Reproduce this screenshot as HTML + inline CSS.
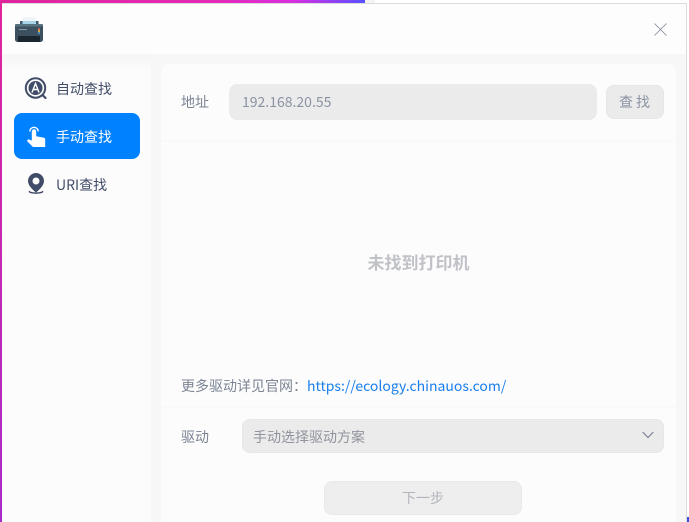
<!DOCTYPE html>
<html><head><meta charset="utf-8">
<style>
*{box-sizing:border-box}
html,body{margin:0;padding:0}
body{width:689px;height:522px;position:relative;overflow:hidden;background:#fff;font-family:"Noto Sans CJK SC","Liberation Sans",sans-serif;font-size:14px}
.a{position:absolute;white-space:nowrap}
</style></head><body>
<div class="a" style="left:0;top:0;width:365px;height:3px;background:linear-gradient(90deg,#e0249c 0,#e52ab8 60%,#d92ee0 80%,#5a50ff 100%)"></div>
<div class="a" style="left:365px;top:0;width:10px;height:3px;background:#f4f4f4"></div>
<div class="a" style="left:0;top:0;width:2px;height:522px;background:linear-gradient(180deg,#e0249c 0,#a82bc8 100%)"></div>
<div class="a" style="left:2px;top:3px;width:685px;height:519px;background:#f7f7f7;border-top:1px solid #dcdcdc;border-right:1px solid #dcdcdc"></div>
<div class="a" style="left:687px;top:517px;width:2px;height:5px;background:#3b50e0"></div>
<!-- title bar -->
<div class="a" style="left:2px;top:4px;width:684px;height:50px;background:#fdfdfd"></div>
<svg class="a" style="left:14px;top:16px" width="30" height="28" viewBox="0 0 30 28">
<path d="M8 6l1-5h12l2 5z" fill="#eef5f8"/><rect x="8" y="5" width="15" height="3" fill="#a8d3e8"/>
<rect x="6" y="5" width="2.500" height="4" fill="#3c5a68"/><rect x="22" y="5" width="2.500" height="4" fill="#3c5a68"/>
<rect x="1" y="8" width="28" height="18" rx="2.500" fill="#3d505f"/>
<rect x="1" y="8" width="28" height="2.500" rx="1" fill="#56727f"/>
<rect x="4" y="20" width="22" height="6" fill="#1a2630"/>
<rect x="24" y="12" width="2" height="2" fill="#d0604e"/><rect x="24" y="14" width="2" height="2" fill="#d8a83c"/><rect x="24" y="16" width="2" height="2" fill="#4a8ccc"/>
<rect x="5" y="13" width="8" height="1" fill="#8a9aa5"/>
</svg>
<svg class="a" style="left:654px;top:23px" width="13" height="13" viewBox="0 0 13 13"><path d="M.5.5l12 12M12.5.5l-12 12" stroke="#7d8494" stroke-width=".8" fill="none"/></svg>
<!-- sidebar -->
<div class="a" style="left:2px;top:54px;width:149px;height:468px;background:linear-gradient(#f5f5f5 0,#fcfcfc 18px)"></div>
<div class="a" style="left:14px;top:113px;width:126px;height:46px;background:#0081ff;border-radius:8px"></div>
<svg class="a" style="left:24px;top:77px" width="23" height="23" viewBox="0 0 23 23">
<circle cx="11.500" cy="11" r="9.700" fill="none" stroke="#414d68" stroke-width="2"/>
<circle cx="11.500" cy="11" r="7" fill="#414d68"/>
<path d="M8 15.500L11.500 6.500l3.500 9M9.300 12.500h4.400" fill="none" stroke="#fff" stroke-width="1.400"/>
<path d="M18.500 18l3 3" stroke="#414d68" stroke-width="2.200" stroke-linecap="round"/>
</svg>
<svg class="a" style="left:26px;top:125px" width="20" height="23" viewBox="0 0 20 23">
<path d="M3.800 6.500a4.200 4.200 0 0 1 8.400 0" fill="none" stroke="#fff" stroke-width="1.400"/>
<path d="M5.800 6.500a2.200 2.200 0 0 1 4.400 0v4.800l7.300 1.300c1.200.3 1.700 1 1.700 2.100V22H7l-6-6 1-1.800 3.800 1.300z" fill="#fff"/>
</svg>
<svg class="a" style="left:26px;top:172px" width="20" height="23" viewBox="0 0 20 23">
<path fill-rule="evenodd" d="M10 1a8 8 0 0 1 8 8c0 4.500-4.500 8.500-8 11.500C6.500 17.500 2 13.500 2 9a8 8 0 0 1 8-8zm0 4.500a3.500 3.500 0 1 0 0 7 3.500 3.500 0 0 0 0-7z" fill="#414d68"/>
<path d="M3.500 19c-1.500 2.800 14.500 2.800 13 0" fill="none" stroke="#414d68" stroke-width="1.500"/>
</svg>
<div class="a" style="left:56px;top:79px;line-height:20px;color:#414d68">自动查找</div>
<div class="a" style="left:56px;top:127px;line-height:20px;color:#fff">手动查找</div>
<div class="a" style="left:56px;top:175px;line-height:20px;color:#414d68">URI查找</div>
<!-- main -->
<div class="a" style="left:161px;top:64px;width:515px;height:458px;background:#fcfcfc;border-radius:8px 8px 0 0"></div>
<div class="a" style="left:161px;top:140px;width:515px;height:2px;background:#f9f9f9"></div>
<div class="a" style="left:161px;top:406px;width:515px;height:2px;background:#f9f9f9"></div>
<div class="a" style="left:181px;top:92px;line-height:20px;color:#7c8494">地址</div>
<div class="a" style="left:229px;top:84px;width:368px;height:36px;background:#ebebeb;border-radius:8px"></div>
<div class="a" style="left:242px;top:92px;line-height:20px;color:#8a92a3">192.168.20.55</div>
<div class="a" style="left:606px;top:85px;width:58px;height:34px;background:#ebebeb;border:1px solid #e6e6e6;border-radius:8px;text-align:center;line-height:32px;color:#8a92a3;letter-spacing:3px;padding-left:2px">查找</div>
<div class="a" style="left:161px;top:249px;width:515px;text-align:center;line-height:26px;font-size:17px;font-weight:bold;color:#c0c2c8">未找到打印机</div>
<div class="a" style="left:181px;top:376px;line-height:20px;color:#7c8494">更多驱动详见官网：</div>
<div class="a" style="left:307px;top:376px;line-height:20px;color:#1a7fee">https://ecology.chinauos.com/</div>
<div class="a" style="left:181px;top:427px;line-height:20px;color:#7c8494">驱动</div>
<div class="a" style="left:242px;top:419px;width:422px;height:34px;background:#ebebeb;border:1px solid #e6e6e6;border-radius:8px"></div>
<div class="a" style="left:253px;top:427px;line-height:20px;color:#8f939c">手动选择驱动方案</div>
<svg class="a" style="left:642px;top:431px" width="12" height="8" viewBox="0 0 12 8"><path d="M.7 1l5.300 5.500L11.300 1" fill="none" stroke="#7d8494" stroke-width="1.200"/></svg>
<div class="a" style="left:324px;top:481px;width:198px;height:34px;background:#eeeeee;border:1px solid #e9e9e9;border-radius:8px;text-align:center;line-height:32px;color:#b2b5bb">下一步</div>
</body></html>
